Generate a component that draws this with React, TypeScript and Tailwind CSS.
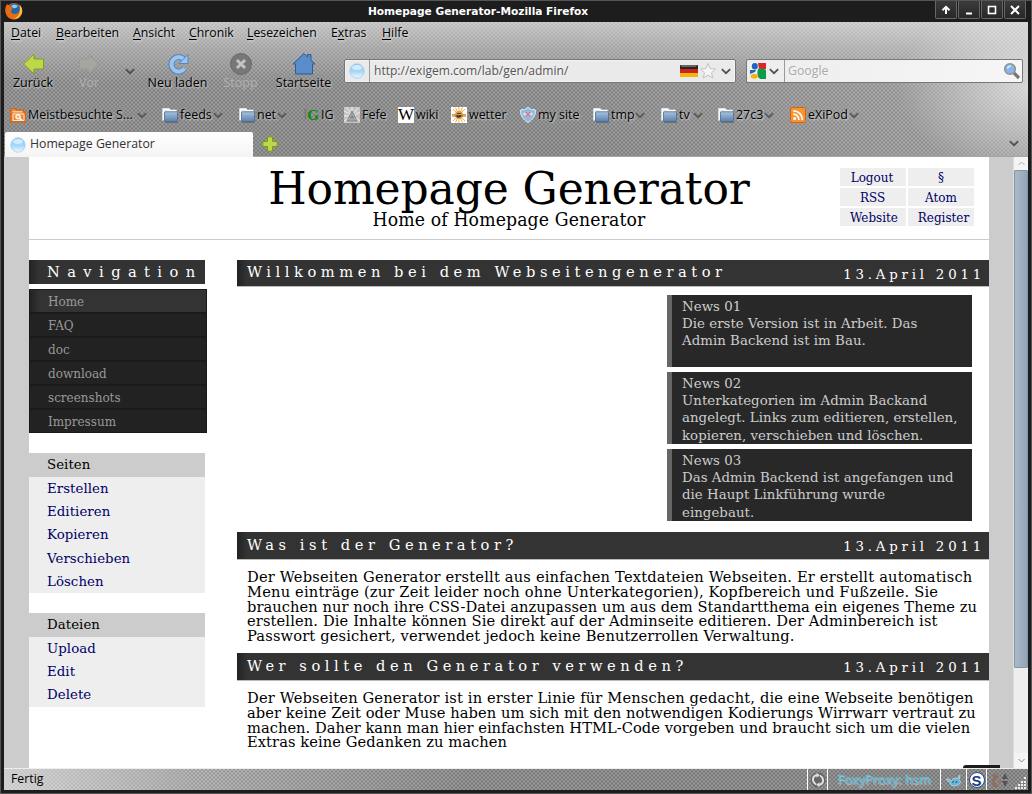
import React from "react";

const Chevron = ({ c = "#505050" }: { c?: string }) => (
  <svg width="10" height="7" viewBox="0 0 10 7" className="shrink-0">
    <path d="M0.8 1.2 L5 5.2 L9.2 1.2" fill="none" stroke={c} strokeWidth="1.8" />
  </svg>
);

const Orb = () => (
  <svg width="16" height="16" viewBox="0 0 16 16" className="shrink-0">
    <defs>
      <linearGradient id="orb" x1="0" y1="0" x2="0" y2="1">
        <stop offset="0" stopColor="#8cc8f4" />
        <stop offset="0.55" stopColor="#a8d8f8" />
        <stop offset="1" stopColor="#f2faff" />
      </linearGradient>
    </defs>
    <circle cx="8" cy="8" r="7.2" fill="url(#orb)" stroke="#9ecbee" strokeWidth="0.8" />
    <ellipse cx="8" cy="4.5" rx="4.8" ry="2.5" fill="#d2ecfc" />
  </svg>
);

const Folder = () => (
  <svg width="16" height="16" viewBox="0 0 16 16" className="shrink-0">
    <defs>
      <linearGradient id="fold" x1="0" y1="0" x2="0" y2="1">
        <stop offset="0" stopColor="#a9c4df" />
        <stop offset="1" stopColor="#5980ab" />
      </linearGradient>
    </defs>
    <path d="M1 13.5 V2 H7 L8 3.5 H14 V6" fill="#eee" stroke="#fff" strokeWidth="1.3" />
    <rect x="2.5" y="4.8" width="13" height="9.7" rx="0.5" fill="url(#fold)" stroke="#466a94" strokeWidth="0.8" />
    <path d="M3 15.5 H16" stroke="#666" strokeWidth="0.8" />
  </svg>
);

const Rss = () => (
  <svg width="16" height="16" viewBox="0 0 16 16" className="shrink-0">
    <rect x="0.5" y="0.5" width="15" height="15" rx="2" fill="#f79433" stroke="#d96208" />
    <circle cx="4.6" cy="11.6" r="1.5" fill="#fff" />
    <path d="M3.2 7.2 A5.6 5.6 0 0 1 8.9 13 M3.2 3.8 A9 9 0 0 1 12.3 13" stroke="#fff" strokeWidth="1.8" fill="none" />
  </svg>
);

const MostVisited = () => (
  <svg width="16" height="16" viewBox="0 0 16 16" className="shrink-0">
    <path d="M0.8 14.8 V1.5 H5.5 L6.5 3 H13.5 V5 H15.2 V14.8 Z" fill="#e98a3a" stroke="#d9600a" strokeWidth="1.2" />
    <path d="M2.5 4.8 H12.5 M3 14 V7 H14 V13.5 H3" stroke="#ffe3c4" fill="none" />
    <circle cx="8" cy="9.8" r="2.2" fill="#f5b27a" stroke="#fff" strokeWidth="1.2" />
    <path d="M9.8 11.3 L12 13.3" stroke="#fff" strokeWidth="1.5" />
  </svg>
);

const GreenG = () => (
  <span className="relative flex h-4 w-4 shrink-0 items-center justify-end font-['Liberation_Serif',serif] text-[15px] font-bold leading-4 text-[#078a07] [text-shadow:none]">
    <span className="absolute left-0 top-0 text-[14px] font-normal text-[#777]">I</span>G
  </span>
);

const Fefe = () => (
  <svg width="16" height="16" viewBox="0 0 16 16" className="shrink-0">
    <rect width="16" height="16" fill="#c4c4c4" />
    <path d="M0 4 L6 7 M2 0 L7 6 M8 0 V5 M14 1 L10 6 M16 5 L11 8 M0 9 L5 9 M0 14 L4 12 M16 14 L12 11" stroke="#eee" />
    <path d="M8 4 L3 14 H13 Z M8 5 L8 14 M5 10 H11 M5 14 L8 9 L11 14" fill="#bbb" stroke="#777" strokeWidth="0.8" />
  </svg>
);

const Wiki = () => (
  <span className="flex h-4 w-4 shrink-0 items-center justify-center bg-white font-['Liberation_Serif',serif] text-[17px] leading-4 text-black">W</span>
);

const Weather = () => (
  <svg width="16" height="16" viewBox="0 0 16 16" className="shrink-0">
    <rect width="16" height="16" fill="#fff" />
    <path d="M8 0 V16 M2 2 L14 14 M14 2 L2 14 M4.5 0.5 L11.5 15.5 M11.5 0.5 L4.5 15.5" stroke="#f2a637" strokeWidth="0.9" />
    <circle cx="8" cy="8" r="4" fill="#f29a20" />
    <path d="M4.5 8 A4 4 0 0 1 11.5 8 L9 10.5 H6Z" fill="#173d70" />
    <path d="M1 7.6 H15" stroke="#f29a20" strokeWidth="1.2" />
    <path d="M1 9 H6 M10 9 H15" stroke="#8a7340" strokeWidth="1" />
  </svg>
);

const Shield = () => (
  <svg width="16" height="16" viewBox="0 0 16 16" className="shrink-0">
    <path d="M0.5 3 Q5 3 8 0.5 Q11 3 15.5 3 Q16 11 8 15.6 Q0 11 0.5 3Z" fill="#8fbce2" stroke="#d9eaf7" />
    <path d="M4 4 L8 6 L12 4 L11 12 L8 9 L5 12Z" fill="#c5b3c8" />
    <circle cx="4.5" cy="7" r="1.3" fill="#d4e6f6" />
    <circle cx="11.5" cy="7" r="1.3" fill="#d4e6f6" />
    <path d="M6 5 L10 10 M10 5 L6 10" stroke="#c87d90" strokeWidth="1.1" />
  </svg>
);

const Firefox = () => (
  <svg width="18" height="18" viewBox="0 0 18 18" className="mt-[1px]">
    <circle cx="9" cy="9.3" r="8.4" fill="#d9540c" />
    <circle cx="9.5" cy="7.4" r="6" fill="#2464a8" />
    <path d="M6 4 Q9 1 13 4 Q11 7 8 6Z" fill="#91c9ec" />
    <path d="M1 4 Q2 1 3 3 Q5 3 6.5 5.5 Q8 7 6 9 Q6 12 10 12 Q14 12 15 6 Q18 12 13 16 Q6 19 2 14 Q-1 9 1 4Z" fill="#e66b13" />
    <path d="M14.5 2.5 Q18.5 7 16.5 12 Q14 17 9 17 Q15 14 15 8Z" fill="#f7c640" />
  </svg>
);

const menu = [
  { a: "D", t: "atei", w: "w-[45px]" },
  { a: "B", t: "earbeiten", w: "w-[77px]" },
  { a: "A", t: "nsicht", w: "w-[56px]" },
  { a: "C", t: "hronik", w: "w-[58px]" },
  { a: "L", t: "esezeichen", w: "w-[84px]" },
];

const WinButton = ({ children }: { children: React.ReactNode }) => (
  <div className="flex h-[18px] w-[22px] items-center justify-center rounded-b-[2px] border border-t-0 border-[#666] bg-[linear-gradient(#3b3b3b,#282828)]">
    <svg width="10" height="10" viewBox="0 0 10 10" fill="none" stroke="#fff" strokeWidth="2">{children}</svg>
  </div>
);

const ToolButton = ({ w, label, dim, children }: { w: string; label: string; dim?: boolean; children: React.ReactNode }) => (
  <div className={"flex shrink-0 flex-col items-center " + w}>
    <svg width="24" height="24" viewBox="0 0 24 24">{children}</svg>
    <span className={"-mt-px h-[16px] whitespace-nowrap text-[12.5px] leading-[16px] " + (dim ? "text-[#b0b0b0] [text-shadow:none]" : "text-black")}>{label}</span>
  </div>
);

const bookmarks = [
  { w: "w-[152px]", icon: <MostVisited />, t: "Meistbesuchte S...", d: true, tw: "w-[109px]" },
  { w: "w-[77px]", icon: <Folder />, t: "feeds", d: true, tw: "w-[33px]" },
  { w: "w-[64px]", icon: <Folder />, t: "net", d: true, tw: "w-[20px]" },
  { w: "w-[41px]", icon: <GreenG />, t: "IG", tw: "w-[12px]" },
  { w: "w-[54px]", icon: <Fefe />, t: "Fefe", tw: "w-[25px]" },
  { w: "w-[53px]", icon: <Wiki />, t: "wiki", tw: "w-[24px]" },
  { w: "w-[69px]", icon: <Weather />, t: "wetter", tw: "w-[39px]" },
  { w: "w-[73px]", icon: <Shield />, t: "my site", tw: "w-[43px]" },
  { w: "w-[68px]", icon: <Folder />, t: "tmp", d: true, tw: "w-[24px]" },
  { w: "w-[57px]", icon: <Folder />, t: "tv", d: true, tw: "w-[14px]" },
  { w: "w-[72px]", icon: <Folder />, t: "27c3", d: true, tw: "w-[28px]" },
  { w: "w-[80px]", icon: <Rss />, t: "eXiPod", d: true, tw: "w-[41px]" },
];

const Heading = ({ t, size = "h-[28px]", lead = "leading-[25px]" }: { t: string; size?: string; lead?: string }) => (
  <div className={"flex justify-between border-b border-[#bbb] bg-[linear-gradient(90deg,#222_0,#333_10px)] pl-[10px] text-white " + size}>
    <span className={"whitespace-nowrap text-[14.67px] tracking-[4.54px] " + lead}>{t}</span>
    <span className="whitespace-nowrap pr-[4px] text-[13.33px] leading-[29px] tracking-[3.8px]">13.April 2011</span>
  </div>
);

const News = ({ lines }: { lines: string[] }) => (
  <div className="h-[72px] w-[305px] border-l-[5px] border-[#666] bg-[#282828] pl-[10px] pt-[3px] text-[13.33px] leading-[17.2px] tracking-[0.04px] text-[#ccc]">
    {lines.map((l) => <div key={l} className="whitespace-nowrap">{l}</div>)}
  </div>
);

const Para = ({ lines }: { lines: [string, string][] }) => (
  <div className="pl-[10px] text-[14.67px] leading-[14.67px] text-black">
    {lines.map(([l, c]) => <div key={l} className={"whitespace-nowrap " + c}>{l}</div>)}
  </div>
);

const SideBox = ({ title, items }: { title: string; items: string[] }) => (
  <div className="w-[176px] bg-[#eee] pb-[0.4px] text-[13.33px] tracking-[0.05px]">
    <div className="h-6 bg-[#ccc] pl-[18px] leading-[23px] text-black">{title}</div>
    {items.map((i) => <div key={i} className="h-[23.2px] pl-[18px] leading-[23px] text-[#000066]">{i}</div>)}
  </div>
);

export default function App() {
  return (
    <div className="flex h-[794px] w-[1032px] flex-col overflow-hidden border border-[#555] bg-[#1d1d1d] font-['Open_Sans','Noto_Sans',sans-serif] text-[12.3px] text-black">
      <header className="flex h-[21px] shrink-0 pl-[4px] pr-[5px]">
        <Firefox />
        <div className="flex flex-1 justify-center font-['DejaVu_Sans',sans-serif] text-[10.6px] font-bold leading-[20px] text-white">
          <span className="whitespace-nowrap pr-[2px]">Homepage Generator-Mozilla Firefox</span>
        </div>
        <div className="flex gap-[1px]">
          <WinButton><path d="M5 9 V2 M1.5 5.2 L5 1.8 L8.5 5.2" /></WinButton>
          <WinButton><path d="M2 8.5 H8" /></WinButton>
          <WinButton><rect x="1.5" y="1.5" width="7" height="7" strokeWidth="1.6" /></WinButton>
          <WinButton><path d="M1 1 L9 9 M9 1 L1 9" /></WinButton>
        </div>
      </header>

      <div className="mx-[3px] flex h-[768px] shrink-0 flex-col">
        <div className="flex h-[135px] shrink-0 flex-col [background-image:radial-gradient(ellipse_1.6px_0.9px,#ffffff40_70%,transparent),radial-gradient(ellipse_1.6px_0.9px,#ffffff40_70%,transparent),radial-gradient(ellipse_130px_90px_at_1024px_65px,#ffffff90,transparent),linear-gradient(90deg,transparent_55%,#ffffff30),linear-gradient(#bdbdbd_0,#a0a0a0_25px,#7f7f7f_60px,#797979_100%)] [background-position:0_0.5px,2px_2.5px,0_0,0_0,0_0] [background-size:4px_4px,4px_4px,100%_100%,100%_100%,100%_100%] [text-shadow:1px_1px_2px_#ffffff99]">
          <nav className="flex h-[22px] pl-[7px] leading-[22px]">
            {menu.map((m) => <span key={m.t} className={"shrink-0 " + m.w}><u className="underline-offset-2">{m.a}</u>{m.t}</span>)}
            <span className="w-[51px]">E<u className="underline-offset-2">x</u>tras</span>
            <span><u className="underline-offset-2">H</u>ilfe</span>
          </nav>
          <div className="flex h-[58px] pt-[8px]">
            <ToolButton w="w-[58px]" label="Zurück">
              <path d="M2.5 12 L13 2 V7 H22.5 V17 H13 V22 Z" fill="#bfd84b" stroke="#7d9f20" />
            </ToolButton>
            <ToolButton w="w-[54px]" label="Vor" dim>
              <path d="M21.5 12 L12 3 V7 H2.5 V17 H12 V21 Z" fill="#a6a6a0" stroke="#9b9b96" />
            </ToolButton>
            <div className="flex w-[28px] justify-center pt-[16px]"><Chevron /></div>
            <ToolButton w="w-[67px]" label="Neu laden">
              <path d="M18 7.5 A7.2 7.2 0 1 0 18.5 16.5" fill="none" stroke="#5787bf" strokeWidth="6" />
              <path d="M18 7.5 A7.2 7.2 0 1 0 18.5 16.5" fill="none" stroke="#9bc5ed" strokeWidth="4" />
              <path d="M22 2.5 V11.5 H13 Z" fill="#9bc5ed" stroke="#5787bf" />
            </ToolButton>
            <ToolButton w="w-[59px]" label="Stopp" dim>
              <circle cx="12" cy="12" r="10.5" fill="#777" stroke="#6b6b6b" />
              <path d="M8 8 L16 16 M16 8 L8 16" stroke="#c4c4c4" strokeWidth="3" />
            </ToolButton>
            <ToolButton w="w-[67px]" label="Startseite">
              <path d="M1 12 L12 1.5 L15.5 5 V2.5 H19 V8.2 L23 12 H20.5 V22 H3.5 V12 Z" fill="#598cc8" stroke="#2d5b95" />
            </ToolButton>
            <div className="ml-[7px] mt-[7px] flex h-[24px] w-[392px] items-center rounded-[2px] border border-[#777] bg-[#eaeaea] text-[12.05px] shadow-[inset_0_0_0_1px_#ffffff66]">
              <div className="flex h-full w-[25px] items-center justify-center border-r border-[#999]"><Orb /></div>
              <span className="flex-1 pl-[4px] text-[#555]">http://exigem.com/lab/gen/admin/</span>
              <svg width="18" height="12" viewBox="0 0 20 12" preserveAspectRatio="none">
                <rect width="20" height="12" fill="#d12018" /><rect width="20" height="4" fill="#262626" /><rect y="8" width="20" height="4" fill="#f2b70d" />
                <path d="M0 0 H20 L17 2 H2Z" fill="#666" />
              </svg>
              <svg width="18" height="18" viewBox="0 0 18 18" className="ml-[1px]">
                <path d="M9 1.5 L11.2 6.5 L16.5 7 L12.5 10.8 L13.8 16 L9 13.2 L4.2 16 L5.5 10.8 L1.5 7 L6.8 6.5Z" fill="#f4f4f4" stroke="#c2c2c2" />
              </svg>
              <div className="flex w-[18px] justify-center pr-[1px]"><Chevron /></div>
            </div>
            <div className="ml-[10px] mt-[7px] flex h-[24px] w-[277px] items-center rounded-[2px] border border-[#777] bg-[linear-gradient(90deg,#ededed,#f6f6f6)]">
              <div className="flex h-full w-[38px] items-center gap-[3px] border-r border-[#999] pl-[3px]">
                <svg width="16" height="16" viewBox="0 0 16 16">
                  <rect width="16" height="16" fill="#f2f2f2" />
                  <path d="M8 0 H16 V6 H9Z" fill="#e02424" /><path d="M8 6 Q12 4 16 7 V16 H10 Q6 13 8 6Z" fill="#129a48" />
                  <ellipse cx="4.8" cy="3.2" rx="3" ry="3.2" fill="#2162c4" /><path d="M0 7 H6 L5 9 L0 11Z" fill="#2162c4" /><ellipse cx="4.3" cy="13.3" rx="3.7" ry="2.5" fill="#f2b21c" />
                </svg>
                <Chevron />
              </div>
              <span className="flex-1 pl-[3px] text-[#aaa]">Google</span>
              <svg width="18" height="18" viewBox="0 0 18 18" className="mr-[1px]">
                <path d="M11 11 L16 16" stroke="#777" strokeWidth="3.2" /><circle cx="7" cy="7" r="5.3" fill="#89b7ec" stroke="#929292" strokeWidth="1.6" /><path d="M4.5 6.5 Q5 4 8 4" stroke="#d9ecff" fill="none" strokeWidth="1.5" />
              </svg>
            </div>
          </div>
          <div className="flex h-[30px] items-start pl-[6px] pt-[4px] text-[12.45px]">
            {bookmarks.map((b) => (
              <div key={b.t} className={"flex h-[18px] shrink-0 items-center " + b.w}>
                {b.icon}
                <span className={"ml-[2px] shrink-0 whitespace-nowrap leading-[18px] " + b.tw}>{b.t}</span>
                {b.d && <Chevron c="#5a5a5a" />}
              </div>
            ))}
          </div>
          <div className="flex h-[25px] border-b border-[#a6a6a6]">
            <div className="-mb-px ml-[1px] flex h-[25px] w-[248px] items-center gap-[4px] rounded-t-[2px] bg-[linear-gradient(#fff,#f4f4f4)] pl-[5px] text-[#333] [text-shadow:none]"><Orb />Homepage Generator</div>
            <svg width="16" height="16" viewBox="0 0 16 16" className="ml-[9px] mt-[4px]"><path d="M5.5 0.8 H10.5 V5.5 H15.2 V10.5 H10.5 V15.2 H5.5 V10.5 H0.8 V5.5 H5.5Z" fill="#bdd848" stroke="#799c1c" /></svg>
            <div className="flex-1" />
            <div className="mr-[9px] pt-[8px]"><Chevron /></div>
          </div>
        </div>

        <main className="flex h-[611px] shrink-0 overflow-hidden bg-[#ccc] pl-[25px] font-['DejaVu_Serif',serif]">
          <div className="h-[611px] w-[960px] bg-white">
            <div className="flex h-[83px] border-b border-[#ccc]">
              <div className="w-[240px]" />
              <div className="flex w-[480px] flex-col items-center whitespace-nowrap text-black">
                <div className="h-[53px] text-[44px] leading-[63px] tracking-[-0.1px]">Homepage Generator</div>
                <div className="font-['DejaVu_Serif_Condensed','DejaVu_Serif',serif] text-[19.2px] leading-[20px] tracking-[0.14px]">Home of Homepage Generator</div>
              </div>
              <div className="ml-[91px] mt-[11px] grid h-[58px] w-[134px] grid-cols-2 gap-[2px] text-center font-['DejaVu_Serif_Condensed','DejaVu_Serif',serif] text-[13.33px] leading-[19px] text-[#000066]">
                <span className="h-[18px] bg-[#eee] pr-[2px]">Logout</span><span className="h-[18px] bg-[#eee]">§</span>
                <span className="h-[18px] bg-[#eee] pr-[1px]">RSS</span><span className="h-[18px] bg-[#eee]">Atom</span>
                <span className="h-[18px] bg-[#eee] pl-[2px]">Website</span><span className="h-[18px] bg-[#eee] pl-[5px]">Register</span>
              </div>
            </div>
            <div className="flex pt-[20px]">
              <aside className="w-[208px] shrink-0">
                <div className="h-[24px] w-[176px] whitespace-nowrap bg-[linear-gradient(90deg,#222_0,#333_10px)] pl-[18px] text-[14.67px] leading-[23px] tracking-[7.4px] text-white">Navigation</div>
                <div className="mt-[5px] w-[178px] border border-[#191919] font-['DejaVu_Serif_Condensed','DejaVu_Serif',serif] text-[13.33px] leading-[23px] text-[#999]">
                  <div className="h-[24px] border-b-2 border-[#1a1a1a] bg-[linear-gradient(90deg,#222_0,#333_10px)] pl-[18px]">Home</div>
                  <div className="h-[24px] border-b-2 border-[#1a1a1a] bg-[#222] pl-[18px]">FAQ</div>
                  <div className="h-[24px] border-b-2 border-[#1a1a1a] bg-[#222] pl-[18px]">doc</div>
                  <div className="h-[24px] border-b-2 border-[#1a1a1a] bg-[#222] pl-[18px]">download</div>
                  <div className="h-[24px] border-b-2 border-[#1a1a1a] bg-[#222] pl-[18px]">screenshots</div>
                  <div className="h-[22px] bg-[#222] pl-[18px]">Impressum</div>
                </div>
                <div className="mt-[20px] flex flex-col gap-[19.6px]">
                  <SideBox title="Seiten" items={["Erstellen", "Editieren", "Kopieren", "Verschieben", "Löschen"]} />
                  <SideBox title="Dateien" items={["Upload", "Edit", "Delete"]} />
                </div>
              </aside>
              <section className="w-[752px]">
                <Heading t="Willkommen bei dem Webseitengenerator" size="h-[27px]" lead="leading-[23px]" />
                <div className="ml-[430px] mt-[8px] flex h-[237px] flex-col gap-[5px]">
                  <News lines={["News 01", "Die erste Version ist in Arbeit. Das", "Admin Backend ist im Bau."]} />
                  <News lines={["News 02", "Unterkategorien im Admin Backand", "angelegt. Links zum editieren, erstellen,", "kopieren, verschieben und löschen."]} />
                  <News lines={["News 03", "Das Admin Backend ist angefangen und", "die Haupt Linkführung wurde", "eingebaut."]} />
                </div>
                <Heading t="Was ist der Generator?" />
                <div className="h-[93px] pt-[10.3px]">
                  <Para lines={[
                    ["Der Webseiten Generator erstellt aus einfachen Textdateien Webseiten. Er erstellt automatisch", "tracking-[0.18px]"],
                    ["Menu einträge (zur Zeit leider noch ohne Unterkategorien), Kopfbereich und Fußzeile. Sie", "tracking-[0.18px]"],
                    ["brauchen nur noch ihre CSS-Datei anzupassen um aus dem Standartthema ein eigenes Theme zu", "tracking-[0.05px]"],
                    ["erstellen. Die Inhalte können Sie direkt auf der Adminseite editieren. Der Adminbereich ist", "tracking-[0.12px]"],
                    ["Passwort gesichert, verwendet jedoch keine Benutzerrollen Verwaltung.", "tracking-[0.14px]"],
                  ]} />
                </div>
                <Heading t="Wer sollte den Generator verwenden?" />
                <div className="relative h-[87px] pt-[10.3px]">
                  <Para lines={[
                    ["Der Webseiten Generator ist in erster Linie für Menschen gedacht, die eine Webseite benötigen", "tracking-[0.14px]"],
                    ["aber keine Zeit oder Muse haben um sich mit den notwendigen Kodierungs Wirrwarr vertraut zu", "tracking-[0.07px]"],
                    ["machen. Daher kann man hier einfachsten HTML-Code vorgeben und braucht sich um die vielen", "tracking-[0.03px]"],
                    ["Extras keine Gedanken zu machen", "tracking-[0.08px]"],
                  ]} />
                  <div className="absolute bottom-0 left-[726px] h-[3px] w-[37px] rounded-tl-[3px] bg-[#1d1d1d]" />
                </div>
              </section>
            </div>
          </div>
          <div className="ml-[24px] flex w-[15px] flex-col border-l border-[#ddd] bg-[#eee]">
            <div className="flex h-[13px] items-center justify-center bg-[#f4f4f4]"><svg width="7" height="5" viewBox="0 0 7 5"><path d="M0.5 4 L3.5 1 L6.5 4" stroke="#aaa" fill="none" /></svg></div>
            <div className="h-[498px] rounded-[1px] border border-[#8497a8] bg-[linear-gradient(90deg,#acbac8,#92a5b6)]" />
            <div className="flex-1" />
            <div className="flex h-[15px] items-center justify-center bg-[#f4f4f4]"><svg width="7" height="5" viewBox="0 0 7 5"><path d="M0.5 1 L3.5 4 L6.5 1" stroke="#888" fill="none" /></svg></div>
          </div>
        </main>

        <footer className="flex h-[22px] shrink-0 border-t border-[#eee] leading-[20px] [background-image:radial-gradient(ellipse_1.6px_0.9px,#ffffff48_70%,transparent),radial-gradient(ellipse_1.6px_0.9px,#ffffff48_70%,transparent),linear-gradient(90deg,#c8c8c8,#9c9c9c_18%,#767676_45%,#727272)] [background-position:0_0.5px,2px_2.5px,0_0] [background-size:4px_4px,4px_4px,100%_100%]">
          <span className="flex-1 pl-[7px]">Fertig</span>
          <div className="flex w-[20px] items-center justify-center border-l border-white">
            <svg width="16" height="16" viewBox="0 0 16 16"><circle cx="8" cy="8" r="7.5" fill="#666" /><path d="M7 3 Q2.5 4 3 8.5 Q3.5 11 6 12.5 M9 13 Q13.5 12 13 7.5 Q12.5 5 10 3.5" fill="none" stroke="#ddd" strokeWidth="2" /><path d="M6.5 0.8 L10 3.2 L6.5 5.7Z M9.5 10.3 L6 12.8 L9.5 15.2Z" fill="#ddd" /></svg>
          </div>
          <div className="w-[113px] border-l border-white text-center text-[12.7px] text-[#55bfdf] [text-shadow:1px_1px_1px_#b8c4c8]">FoxyProxy: hsm</div>
          <div className="flex w-[26px] items-center justify-center border-l border-white">
            <svg width="16" height="16" viewBox="0 0 16 16"><path d="M0.5 7 Q4 6 5 9 L8 6 L11 7 L14 3 L13 8 L15 10 Q13 14 8 14 Q4 14 4 10 Q1 10 0.5 7Z" fill="#66b4d6" stroke="#c2e2ef" strokeWidth="0.7" /><circle cx="7" cy="10" r="0.8" fill="#134966" /><circle cx="10.5" cy="10" r="0.8" fill="#134966" /></svg>
          </div>
          <div className="flex w-[20px] items-center justify-center border-l border-white">
            <div className="h-[16px] w-[16px] rounded-full border border-[#244983] bg-white text-center font-['Liberation_Sans',sans-serif] text-[15px] font-bold leading-[15px] text-[#173d80]">S</div>
          </div>
          <div className="flex w-[26px] items-center justify-center border-l border-white">
            <svg width="18" height="16" viewBox="0 0 18 16"><path d="M1 2 L3 3 L5 1 L8 5 L5 7 L4 11 L8 15 H2 Q-1 10 2 6Z" fill="#8b7067" /><path d="M9 6 L11 10 L8 13 L6 9Z" fill="#95766a" /><path d="M14 1 L17 7 H11Z M11 9 H17 L14 15Z" fill="#545454" /></svg>
          </div>
          <svg width="16" height="21" viewBox="-2 0 16 21" fill="#eee"><path d="M10 8h2v2h-2z M7 12h2v2H7z M10 12h2v2h-2z M4 15h2v2H4z M7 15h2v2H7z M10 15h2v2h-2z M1 18h2v2H1z M4 18h2v2H4z M7 18h2v2H7z M10 18h2v2h-2z" /></svg>
        </footer>
      </div>
    </div>
  );
}
